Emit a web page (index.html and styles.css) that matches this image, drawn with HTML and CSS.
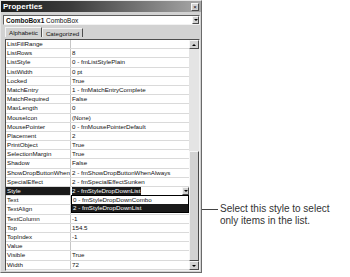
FILE: index.html
```
<!DOCTYPE html>
<html lang="en">
<head>
  <meta charset="UTF-8" />
  <title>Properties - ComboBox1</title>
  <link rel="stylesheet" href="styles.css">
</head>
<body>
  <div class="figure">
    <div class="props">
      <div class="titlebar">
        <span>Properties</span>
        <span class="close">×</span>
      </div>

      <div class="objbox">
        <span class="objname"><b>ComboBox1</b> ComboBox</span>
        <span class="dropbtn"><i class="arrow"></i></span>
      </div>

      <div class="tabs">
        <span class="tab active">Alphabetic</span>
        <span class="tab">Categorized</span>
      </div>

      <div class="gridbox">
        <div class="grid">
          <div class="row"><span class="k">ListFillRange</span><span class="v"></span></div>
          <div class="row"><span class="k">ListRows</span><span class="v">8</span></div>
          <div class="row"><span class="k">ListStyle</span><span class="v">0 - fmListStylePlain</span></div>
          <div class="row"><span class="k">ListWidth</span><span class="v">0 pt</span></div>
          <div class="row"><span class="k">Locked</span><span class="v">True</span></div>
          <div class="row"><span class="k">MatchEntry</span><span class="v">1 - fmMatchEntryComplete</span></div>
          <div class="row"><span class="k">MatchRequired</span><span class="v">False</span></div>
          <div class="row"><span class="k">MaxLength</span><span class="v">0</span></div>
          <div class="row"><span class="k">MouseIcon</span><span class="v">(None)</span></div>
          <div class="row"><span class="k">MousePointer</span><span class="v">0 - fmMousePointerDefault</span></div>
          <div class="row"><span class="k">Placement</span><span class="v">2</span></div>
          <div class="row"><span class="k">PrintObject</span><span class="v">True</span></div>
          <div class="row"><span class="k">SelectionMargin</span><span class="v">True</span></div>
          <div class="row"><span class="k">Shadow</span><span class="v">False</span></div>
          <div class="row"><span class="k">ShowDropButtonWhen</span><span class="v">2 - fmShowDropButtonWhenAlways</span></div>
          <div class="row"><span class="k">SpecialEffect</span><span class="v">2 - fmSpecialEffectSunken</span></div>
          <div class="row sel">
            <span class="k">Style</span>
            <span class="v"><span class="hl">2 - fmStyleDropDownList</span><span class="dropbtn small"><i class="arrow"></i></span></span>
            <div class="droplist">
              <div class="item">0 - fmStyleDropDownCombo</div>
              <div class="item on">2 - fmStyleDropDownList</div>
            </div>
          </div>
          <div class="row"><span class="k">Text</span><span class="v"></span></div>
          <div class="row"><span class="k">TextAlign</span><span class="v"></span></div>
          <div class="row"><span class="k">TextColumn</span><span class="v">-1</span></div>
          <div class="row"><span class="k">Top</span><span class="v">154.5</span></div>
          <div class="row"><span class="k">TopIndex</span><span class="v">-1</span></div>
          <div class="row"><span class="k">Value</span><span class="v"></span></div>
          <div class="row"><span class="k">Visible</span><span class="v">True</span></div>
          <div class="row"><span class="k">Width</span><span class="v">72</span></div>
        </div>
        <div class="scrollbar">
          <span class="sbtn"><i class="arrow up"></i></span>
          <span class="track"><span class="thumb"></span></span>
          <span class="sbtn"><i class="arrow"></i></span>
        </div>
      </div>
    </div>

    <div class="note">
      <span class="lead"></span>
      <p>Select this style to select only items in the list.</p>
    </div>
  </div>
</body>
</html>
```

FILE: styles.css
```
body {
  margin: 0;
  background-color: #fff;
  font-family: 'Liberation Sans', Arial, sans-serif;
  color: #111;
}

.figure {
  display: flex;
  align-items: flex-start;
}

.props {
  width: 202px;
  height: 273px;
  box-sizing: border-box;
  display: flex;
  flex-direction: column;
  background-color: #d2d2d2;
  border: 1px solid #6a6a6a;
  border-left-color: #e6e6e6;
  border-top-color: #e6e6e6;
}

.titlebar {
  height: 11px;
  flex: 0 0 auto;
  display: flex;
  align-items: center;
  justify-content: space-between;
  padding: 0 2px 0 2px;
  background: linear-gradient(to right, #1c1c1c, #3c3c3c 35%, #a8a8a8);
  color: #fff;
  font-weight: bold;
  font-size: 8px;
}

.close {
  width: 6px;
  height: 6px;
  background-color: #d2d2d2;
  border: 1px solid;
  border-color: #f6f6f6 #4a4a4a #4a4a4a #f6f6f6;
  color: #000;
  font-size: 6px;
  line-height: 6px;
  text-align: center;
  font-weight: normal;
}

.objbox {
  height: 10px;
  box-sizing: border-box;
  margin: 3px 1px 0 2px;
  display: flex;
  align-items: center;
  background-color: #fff;
  border: 1px solid;
  border-color: #5e5e5e #f2f2f2 #f2f2f2 #5e5e5e;
  font-size: 6.5px;
}

.objname {
  flex: 1 1 auto;
  padding-left: 2px;
  white-space: nowrap;
}

.dropbtn {
  width: 7px;
  height: 8px;
  box-sizing: border-box;
  display: flex;
  align-items: center;
  justify-content: center;
  background-color: #d2d2d2;
  border: 1px solid;
  border-color: #f6f6f6 #4a4a4a #4a4a4a #f6f6f6;
}

.arrow {
  width: 0;
  height: 0;
  border-left: 2px solid transparent;
  border-right: 2px solid transparent;
  border-top: 2px solid #000;
}

.arrow.up {
  border-top: none;
  border-bottom: 2px solid #000;
}

.tabs {
  height: 10px;
  margin: 2px 0 0 4px;
  display: flex;
  align-items: flex-end;
  font-size: 6.2px;
}

.tab {
  height: 9px;
  box-sizing: border-box;
  display: flex;
  align-items: center;
  padding: 0 3px;
  border: 1px solid;
  border-bottom: none;
  border-color: #f4f4f4 #4e4e4e #f4f4f4 #f4f4f4;
  white-space: nowrap;
}

.tab.active {
  height: 10px;
  padding: 0 3px 1px;
}

.gridbox {
  height: 232px;
  box-sizing: border-box;
  margin: 2px 1px 0 4px;
  display: flex;
  background-color: #fff;
  border: 1px solid;
  border-color: #4e4e4e #f2f2f2 #f2f2f2 #4e4e4e;
}

.grid {
  flex: 1 1 auto;
  display: flex;
  flex-direction: column;
}

.row {
  height: 9.2px;
  box-sizing: border-box;
  display: flex;
  position: relative;
  border-bottom: 1px solid #dadada;
  font-size: 6.2px;
  line-height: 8.2px;
}

.k {
  width: 65px;
  flex: 0 0 auto;
  padding-left: 1px;
  box-sizing: border-box;
  border-right: 1px solid #c6c6c6;
  white-space: nowrap;
  overflow: hidden;
}

.v {
  flex: 1 1 auto;
  display: flex;
  padding-left: 1px;
  white-space: nowrap;
  overflow: hidden;
}

.row.sel .k {
  background-color: #1a1a1a;
  color: #fff;
}

.hl {
  background-color: #1a1a1a;
  color: #fff;
  padding-right: 1px;
}

.dropbtn.small {
  margin-left: auto;
  height: 8.2px;
}

/* open list under the Style row */
.droplist {
  position: absolute;
  top: 100%;
  left: 65px;
  right: 0;
  z-index: 2;
  background-color: #fff;
  border: 1px solid #000;
}

.droplist .item {
  height: 8px;
  line-height: 8px;
  padding-left: 1px;
  white-space: nowrap;
}

.droplist .item.on {
  background-color: #1a1a1a;
  color: #fff;
}

.scrollbar {
  width: 10px;
  flex: 0 0 auto;
  display: flex;
  flex-direction: column;
  background-color: #e4e4e4;
}

.sbtn {
  height: 9px;
  box-sizing: border-box;
  display: flex;
  align-items: center;
  justify-content: center;
  background-color: #d2d2d2;
  border: 1px solid;
  border-color: #f6f6f6 #4a4a4a #4a4a4a #f6f6f6;
}

.track {
  flex: 1 1 auto;
  display: flex;
  flex-direction: column;
  justify-content: flex-end;
}

.thumb {
  height: 110px;
  box-sizing: border-box;
  background-color: #d2d2d2;
  border: 1px solid;
  border-color: #f6f6f6 #4a4a4a #4a4a4a #f6f6f6;
}

.note {
  display: flex;
  align-items: flex-start;
  margin-top: 203px;
}

.lead {
  width: 16px;
  height: 1px;
  margin-top: 6px;
  background-color: #444;
}

.note p {
  width: 122px;
  margin: 0 0 0 2px;
  font-size: 10px;
  line-height: 12px;
  color: #333;
}
```
